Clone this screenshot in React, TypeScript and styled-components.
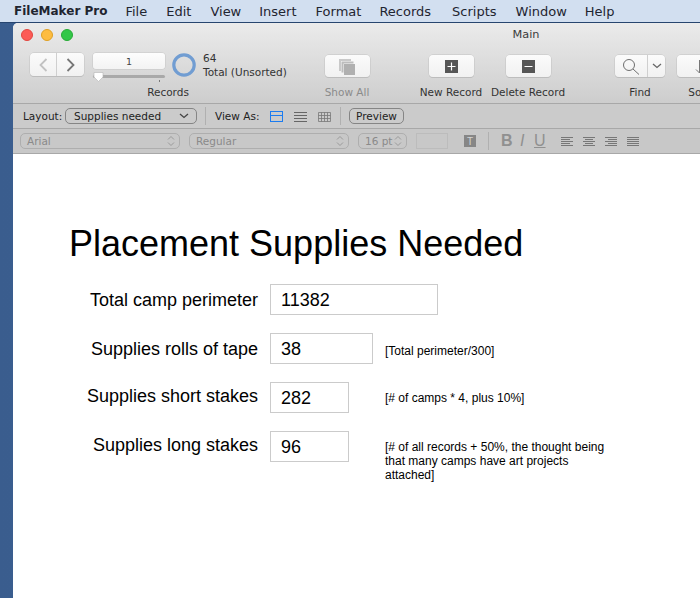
import React from "react";
import styled, { createGlobalStyle } from "styled-components";

const uiFont = `"DejaVu Sans", "Liberation Sans", sans-serif`;
const formFont = `"Liberation Sans", Arial, sans-serif`;

const GlobalStyle = createGlobalStyle`
  html, body {
    margin: 0;
    padding: 0;
    background: #3b6090;
  }
  * {
    box-sizing: border-box;
  }
`;

const Page = styled.div`
  width: 700px;
  height: 598px;
  overflow: hidden;
  display: flex;
  flex-direction: column;
  font-family: ${uiFont};
`;

const MenuBar = styled.div`
  flex: none;
  height: 23px;
  display: flex;
  align-items: center;
  padding-left: 14px;
  background: #d2dff0;
  border-bottom: 1px solid #27456f;
  font-size: 13px;
  color: #1f2530;
  white-space: nowrap;
`;

const AppName = styled.span`
  font-weight: 700;
  font-size: 12px;
  margin-right: 18px;
`;

const MenuItem = styled.span<{ $gap: number }>`
  margin-right: ${(p) => p.$gap}px;
`;

const Desktop = styled.div`
  flex: 1;
  display: flex;
  min-height: 0;
  padding-left: 13px;
  background: linear-gradient(90deg, #3a5d8e, #41689a);
`;

const Window = styled.div`
  flex: none;
  width: 1026px;
  display: flex;
  flex-direction: column;
  background: #fff;
  border-radius: 5px 5px 0 0;
  overflow: hidden;
`;

const Toolbar = styled.div`
  flex: none;
  height: 81px;
  background: linear-gradient(#ebebeb, #cdcdcd);
  border-bottom: 1px solid #a8a8a8;
`;

const TitleRow = styled.div`
  height: 22px;
  display: grid;
  grid-template-columns: 1fr auto 1fr;
  align-items: center;
  padding-top: 1px;
`;

const Lights = styled.div`
  display: flex;
  gap: 8px;
  padding-left: 8px;
`;

const Light = styled.span<{ $c: string; $b: string }>`
  width: 12px;
  height: 12px;
  border-radius: 50%;
  background: ${(p) => p.$c};
  border: 1px solid ${(p) => p.$b};
`;

const WindowTitle = styled.div`
  font-size: 11.3px;
  color: #3c3c3c;
`;

const ToolRow = styled.div`
  display: flex;
  padding: 8px 0 0 17px;
`;

const ToolItem = styled.div<{ $w: number; $ml?: number }>`
  flex: none;
  width: ${(p) => p.$w}px;
  margin-left: ${(p) => p.$ml ?? 0}px;
  display: flex;
  flex-direction: column;
  align-items: center;
`;

const ToolControls = styled.div<{ $top?: number }>`
  height: 32px;
  padding-top: ${(p) => p.$top ?? 0}px;
  align-self: stretch;
  display: flex;
  justify-content: center;
  align-items: flex-start;
`;

const RecordControls = styled(ToolControls)`
  justify-content: flex-start;
`;

const ToolLabel = styled.div<{ $dim?: boolean }>`
  font-size: 10.5px;
  line-height: 14px;
  white-space: nowrap;
  color: ${(p) => (p.$dim ? "#8b8b8b" : "#333")};
`;

const RecordsLabel = styled(ToolLabel)`
  margin-right: 1px;
`;

const PushButton = styled.div<{ $w?: number }>`
  width: ${(p) => p.$w ?? 45}px;
  height: 22px;
  display: flex;
  align-items: center;
  justify-content: center;
  background: linear-gradient(#fbfbfb, #f1f1f1);
  border-radius: 4px;
  box-shadow: 0 0 0 0.5px #c2c2c2, 0 1px 0 #b9b9b9;
`;

const NavButtons = styled(PushButton)`
  height: 23px;
  margin-right: 9px;
`;

const SegCell = styled.div<{ $w: number; $line?: boolean }>`
  width: ${(p) => p.$w}px;
  height: 100%;
  display: flex;
  align-items: center;
  justify-content: center;
  border-right: ${(p) => (p.$line ? "1px solid #cfcfcf" : "none")};
`;

const Pager = styled.div`
  width: 72px;
  margin-right: 7px;
  display: flex;
  flex-direction: column;
`;

const PageField = styled.div`
  height: 16px;
  display: flex;
  align-items: center;
  justify-content: center;
  font-size: 9.5px;
  color: #444;
  background: linear-gradient(#fdfdfd, #f3f3f3);
  border-radius: 3px;
  box-shadow: 0 0 0 0.5px #c6c6c6;
`;

const Slider = styled.div`
  position: relative;
  height: 3px;
  margin-top: 6px;
  background: #a9a9a9;
  border-radius: 2px;
`;

const SliderThumb = styled.svg`
  position: absolute;
  left: 0;
  top: -3px;
`;

const SliderTick = styled.span`
  position: absolute;
  right: 5px;
  top: 5px;
  width: 1px;
  height: 2px;
  background: #777;
`;

const Ring = styled.svg`
  margin-right: 7px;
  flex: none;
`;

const FoundInfo = styled.div`
  margin-top: -2px;
  font-size: 10.5px;
  line-height: 14px;
  color: #333;
  white-space: nowrap;
`;

const LayoutBar = styled.div`
  flex: none;
  height: 25px;
  display: flex;
  align-items: center;
  padding-left: 10px;
  background: #cbcbcb;
  border-bottom: 1px solid #a8a8a8;
  font-size: 10.5px;
  color: #222;
  white-space: nowrap;
`;

const LayoutLabel = styled.span`
  width: 42px;
`;

const LayoutSelect = styled.div`
  width: 132px;
  height: 16px;
  display: flex;
  align-items: center;
  justify-content: space-between;
  padding: 0 7px 0 8px;
  border: 1px solid #858585;
  border-radius: 5px;
`;

const BarDivider = styled.span<{ $ml: number; $mr: number }>`
  width: 1px;
  height: 18px;
  margin: 0 ${(p) => p.$mr}px 0 ${(p) => p.$ml}px;
  background: #b0b0b0;
`;

const ViewLabel = styled.span`
  width: 55px;
`;

const ViewIcons = styled.div`
  display: flex;
  gap: 11px;
`;

const PreviewButton = styled.div`
  width: 55px;
  height: 16px;
  margin-left: -1px;
  display: flex;
  align-items: center;
  justify-content: center;
  border: 1px solid #858585;
  border-radius: 5px;
`;

const FormatBar = styled.div`
  flex: none;
  height: 25px;
  display: flex;
  align-items: center;
  padding-left: 7px;
  background: #c8c8c8;
  border-bottom: 1px solid #a8a8a8;
  font-size: 10.5px;
  color: #8a8a8a;
  white-space: nowrap;
`;

const FormatSelect = styled.div<{ $w: number }>`
  width: ${(p) => p.$w}px;
  height: 16px;
  margin-right: 9px;
  display: flex;
  align-items: center;
  justify-content: space-between;
  padding: 0 4px 0 6px;
  border: 1px solid #aeaeae;
  border-radius: 5px;
`;

const ColorBox = styled.div`
  width: 32px;
  height: 16px;
  margin-right: 16px;
  border: 1px solid #bcbcbc;
`;

const TextColor = styled.div`
  width: 12px;
  height: 12px;
  display: flex;
  align-items: center;
  justify-content: center;
  background: #868686;
  color: #d4d4d4;
  font-family: ${formFont};
  font-size: 10px;
`;

const StyleMark = styled.span<{ $w: number; $kind?: "b" | "i" | "u" }>`
  width: ${(p) => p.$w}px;
  font-family: ${formFont};
  font-size: 16px;
  line-height: 16px;
  color: #909090;
  font-weight: ${(p) => (p.$kind === "b" ? 700 : 400)};
  font-style: ${(p) => (p.$kind === "i" ? "italic" : "normal")};
  text-decoration: ${(p) => (p.$kind === "u" ? "underline" : "none")};
`;

const AlignIcons = styled.div`
  display: flex;
  gap: 10px;
  margin-left: 3px;
`;

const Content = styled.div`
  flex: 1;
  padding: 70px 0 0 56px;
  background: #fff;
  font-family: ${formFont};
  color: #000;
`;

const Heading = styled.h1`
  margin: 0 0 20px;
  font-size: 36px;
  line-height: 40px;
  font-weight: 400;
`;

const FieldGrid = styled.div`
  display: grid;
  grid-template-columns: 189px 103px 225px;
  grid-auto-rows: 31px;
  column-gap: 12px;
  row-gap: 18px;
`;

const FieldLabel = styled.div<{ $shift: number }>`
  align-self: center;
  text-align: right;
  font-size: 18px;
  line-height: 21px;
  white-space: nowrap;
  padding-top: ${(p) => Math.max(p.$shift, 0)}px;
  padding-bottom: ${(p) => Math.max(-p.$shift, 0)}px;
`;

const FieldValue = styled.div<{ $w: number; $span?: boolean }>`
  width: ${(p) => p.$w}px;
  height: 31px;
  grid-column: ${(p) => (p.$span ? "2 / 4" : "auto")};
  display: flex;
  align-items: center;
  padding: 2px 0 0 10px;
  font-size: 18px;
  border: 1px solid #cbcbcb;
`;

const FieldNote = styled.div<{ $top: number }>`
  font-size: 12px;
  line-height: 14px;
  padding-top: ${(p) => p.$top}px;
`;

const Stroke = styled.svg<{ $c?: string }>`
  flex: none;
  display: block;
  fill: none;
  stroke: ${(p) => p.$c ?? "#666"};
`;

const Chevron = ({ color = "#444" }: { color?: string }) => (
  <Stroke $c={color} width="10" height="6" viewBox="0 0 10 6" strokeWidth="1.3">
    <path d="M1 1l4 3.5L9 1" />
  </Stroke>
);

const UpDown = () => (
  <Stroke $c="#9a9a9a" width="8" height="12" viewBox="0 0 8 12" strokeWidth="1">
    <path d="M1 4.500L4 1.500l3 3M1 7.500l3 3 3-3" />
  </Stroke>
);

const AlignLines = ({ rows }: { rows: [number, number][] }) => (
  <Stroke $c="#777" width="12" height="11" viewBox="0 0 12 11" strokeWidth="1">
    {rows.map(([x1, x2], i) => (
      <line key={i} x1={x1} x2={x2} y1={1.5 + i * 2} y2={1.5 + i * 2} />
    ))}
  </Stroke>
);

const records = [
  { label: "Total camp perimeter", value: "11382", width: 168, span: true, shift: 2 },
  { label: "Supplies rolls of tape", value: "38", width: 103, shift: 2, note: "[Total perimeter/300]", top: 11 },
  { label: "Supplies short stakes", value: "282", width: 79, shift: -3, note: "[# of camps * 4, plus 10%]", top: 9 },
  {
    label: "Supplies long stakes",
    value: "96",
    width: 79,
    shift: -3,
    note: "[# of all records + 50%, the thought being that many camps have art projects attached]",
    top: 9,
  },
];

export default function App() {
  return (
    <Page>
      <GlobalStyle />
      <MenuBar>
        <AppName>FileMaker Pro</AppName>
        <MenuItem $gap={19}>File</MenuItem>
        <MenuItem $gap={19}>Edit</MenuItem>
        <MenuItem $gap={18}>View</MenuItem>
        <MenuItem $gap={19}>Insert</MenuItem>
        <MenuItem $gap={18}>Format</MenuItem>
        <MenuItem $gap={21}>Records</MenuItem>
        <MenuItem $gap={19}>Scripts</MenuItem>
        <MenuItem $gap={18}>Window</MenuItem>
        <MenuItem $gap={19}>Help</MenuItem>
      </MenuBar>

      <Desktop>
        <Window>
          <Toolbar>
            <TitleRow>
              <Lights>
                <Light $c="#fc5b57" $b="#e2463f" />
                <Light $c="#fdbc40" $b="#dfa023" />
                <Light $c="#33c748" $b="#27aa35" />
              </Lights>
              <WindowTitle>Main</WindowTitle>
            </TitleRow>
            <ToolRow>
              <ToolItem $w={277}>
                <RecordControls>
                  <NavButtons $w={54}>
                    <SegCell $w={27} $line>
                      <Stroke $c="#c2c2c2" width="9" height="14" viewBox="0 0 9 14" strokeWidth="1.8">
                        <path d="M7.500 1L1.500 7l6 6" />
                      </Stroke>
                    </SegCell>
                    <SegCell $w={27}>
                      <Stroke $c="#777" width="9" height="14" viewBox="0 0 9 14" strokeWidth="1.8">
                        <path d="M1.500 1l6 6-6 6" />
                      </Stroke>
                    </SegCell>
                  </NavButtons>
                  <Pager>
                    <PageField>1</PageField>
                    <Slider>
                      <SliderThumb width="11" height="10" viewBox="0 0 11 10">
                        <path d="M1 .5h9v4.500L5.500 9.500 1 5z" fill="#fff" stroke="#b5b5b5" strokeWidth=".6" />
                      </SliderThumb>
                      <SliderTick />
                    </Slider>
                  </Pager>
                  <Ring width="24" height="24" viewBox="0 0 24 24">
                    <circle cx="12" cy="12" r="10.200" fill="none" stroke="#719dd2" strokeWidth="3.200" />
                  </Ring>
                  <FoundInfo>
                    64
                    <br />
                    Total (Unsorted)
                  </FoundInfo>
                </RecordControls>
                <RecordsLabel>Records</RecordsLabel>
              </ToolItem>

              <ToolItem $w={80}>
                <ToolControls $top={2}>
                  <PushButton>
                    <svg width="18" height="17" viewBox="0 0 18 17">
                      <path d="M1 1h12v2H3v10H1z" fill="#c9c9c9" />
                      <path d="M3.500 3.500h12v2h-10v9h-2z" fill="#bcbcbc" />
                      <rect x="6" y="6" width="11" height="11" fill="#b0b0b0" />
                    </svg>
                  </PushButton>
                </ToolControls>
                <ToolLabel $dim>Show All</ToolLabel>
              </ToolItem>

              <ToolItem $w={78} $ml={25}>
                <ToolControls $top={2}>
                  <PushButton>
                    <svg width="13" height="13" viewBox="0 0 13 13">
                      <rect width="13" height="13" fill="#565656" />
                      <path d="M6.500 2.500v8M2.500 6.500h8" stroke="#fff" strokeWidth="1.200" />
                    </svg>
                  </PushButton>
                </ToolControls>
                <ToolLabel>New Record</ToolLabel>
              </ToolItem>

              <ToolItem $w={76}>
                <ToolControls $top={2}>
                  <PushButton>
                    <svg width="13" height="13" viewBox="0 0 13 13">
                      <rect width="13" height="13" fill="#565656" />
                      <path d="M2.500 6.500h8" stroke="#fff" strokeWidth="1.200" />
                    </svg>
                  </PushButton>
                </ToolControls>
                <ToolLabel>Delete Record</ToolLabel>
              </ToolItem>

              <ToolItem $w={60} $ml={44}>
                <ToolControls $top={2}>
                  <PushButton $w={50}>
                    <SegCell $w={33} $line>
                      <Stroke $c="#6e6e6e" width="18" height="17" viewBox="0 0 18 17" strokeWidth="1">
                        <circle cx="7" cy="7" r="5.500" />
                        <path d="M11 11l6 5.500" />
                      </Stroke>
                    </SegCell>
                    <SegCell $w={17}>
                      <Chevron color="#666" />
                    </SegCell>
                  </PushButton>
                </ToolControls>
                <ToolLabel>Find</ToolLabel>
              </ToolItem>

              <ToolItem $w={58}>
                <ToolControls $top={2}>
                  <PushButton>
                    <Stroke $c="#777" width="9" height="15" viewBox="0 0 9 15" strokeWidth="1">
                      <path d="M4.500 1v13M1 10.500l3.500 3.500L8 10.500" />
                    </Stroke>
                  </PushButton>
                </ToolControls>
                <ToolLabel>Sort</ToolLabel>
              </ToolItem>
            </ToolRow>
          </Toolbar>

          <LayoutBar>
            <LayoutLabel>Layout:</LayoutLabel>
            <LayoutSelect>
              Supplies needed
              <Chevron />
            </LayoutSelect>
            <BarDivider $ml={8} $mr={9} />
            <ViewLabel>View As:</ViewLabel>
            <ViewIcons>
              <Stroke $c="#1c7cf0" width="13" height="11" viewBox="0 0 13 11" strokeWidth="1">
                <rect x=".5" y=".5" width="12" height="10" />
                <path d="M.5 4.500h12" />
              </Stroke>
              <Stroke $c="#666" width="13" height="11" viewBox="0 0 13 11" strokeWidth="1">
                <path d="M0 1.500h13M0 4.500h13M0 7.500h13M0 10.500h13" />
              </Stroke>
              <Stroke $c="#777" width="13" height="11" viewBox="0 0 13 11" strokeWidth=".8">
                <path d="M.5 1.500h12v9H.5zM.5 4.500h12M.5 7.500h12M3.500 1.500v9M6.500 1.500v9M9.500 1.500v9" />
              </Stroke>
            </ViewIcons>
            <BarDivider $ml={9} $mr={9} />
            <PreviewButton>Preview</PreviewButton>
          </LayoutBar>

          <FormatBar>
            <FormatSelect $w={160}>
              Arial
              <UpDown />
            </FormatSelect>
            <FormatSelect $w={160}>
              Regular
              <UpDown />
            </FormatSelect>
            <FormatSelect $w={49}>
              16 pt
              <UpDown />
            </FormatSelect>
            <ColorBox />
            <TextColor>T</TextColor>
            <BarDivider $ml={12} $mr={12} />
            <StyleMark $w={19} $kind="b">B</StyleMark>
            <StyleMark $w={14} $kind="i">I</StyleMark>
            <StyleMark $w={24} $kind="u">U</StyleMark>
            <AlignIcons>
              <AlignLines rows={[[0, 12], [0, 9], [0, 12], [0, 9], [0, 12]]} />
              <AlignLines rows={[[0, 12], [2, 10], [0, 12], [2, 10], [0, 12]]} />
              <AlignLines rows={[[0, 12], [3, 12], [0, 12], [3, 12], [0, 12]]} />
              <AlignLines rows={[[0, 12], [0, 12], [0, 12], [0, 12], [0, 12]]} />
            </AlignIcons>
          </FormatBar>

          <Content>
            <Heading>Placement Supplies Needed</Heading>
            <FieldGrid>
              {records.map((r) => (
                <React.Fragment key={r.label}>
                  <FieldLabel $shift={r.shift}>{r.label}</FieldLabel>
                  <FieldValue $w={r.width} $span={r.span}>
                    {r.value}
                  </FieldValue>
                  {r.note && <FieldNote $top={r.top ?? 0}>{r.note}</FieldNote>}
                </React.Fragment>
              ))}
            </FieldGrid>
          </Content>
        </Window>
      </Desktop>
    </Page>
  );
}
